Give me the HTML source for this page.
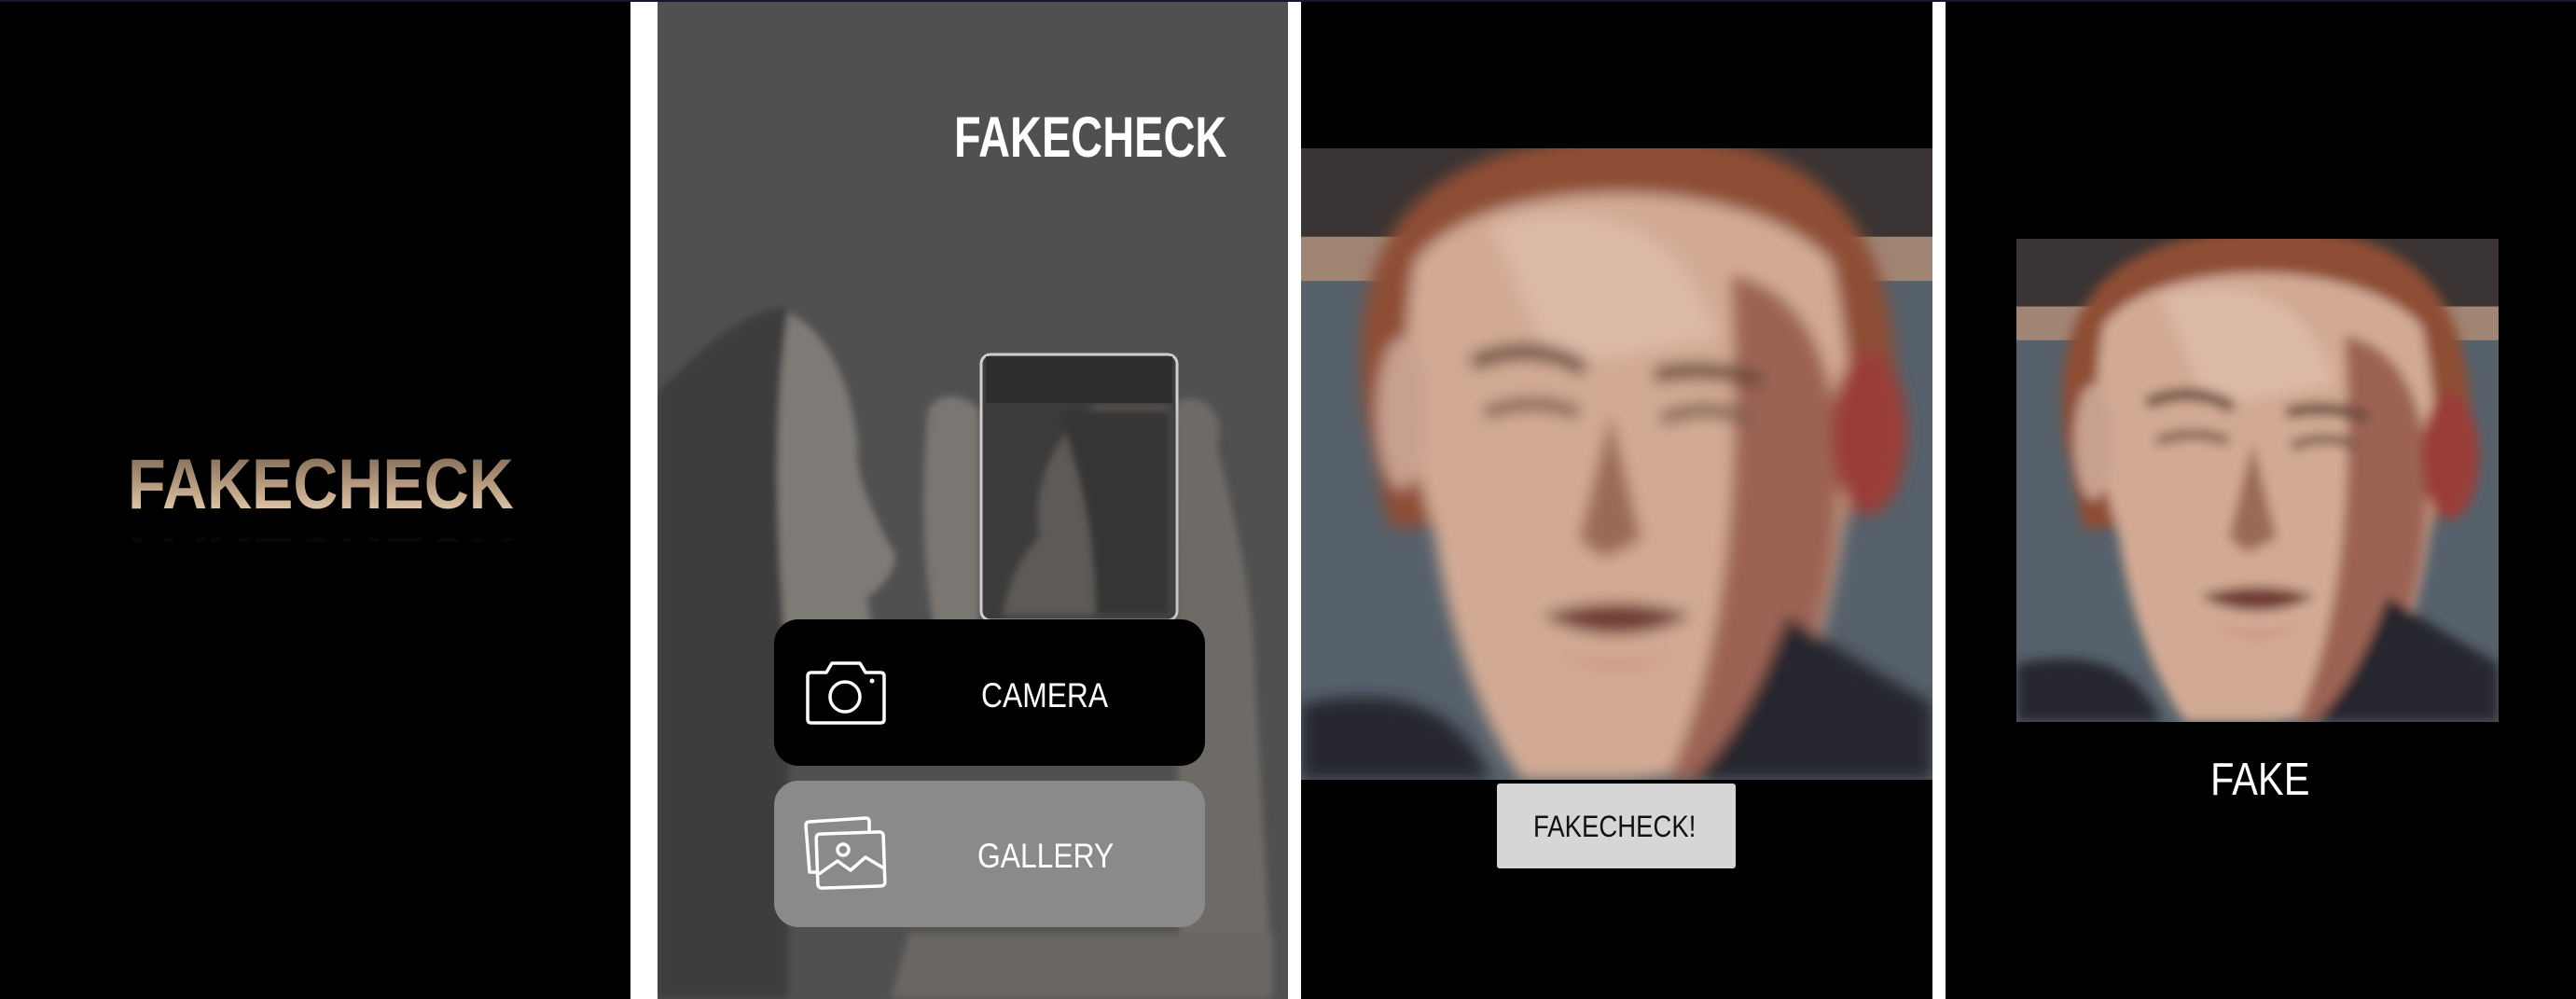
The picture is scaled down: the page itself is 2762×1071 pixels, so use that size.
<!DOCTYPE html>
<html><head><meta charset="utf-8"><style>
*{margin:0;padding:0;box-sizing:border-box}
body{width:2762px;height:1071px;background:#fff;position:relative;overflow:hidden;font-family:"Liberation Sans",sans-serif}
.p{position:absolute;top:0;height:1071px;overflow:hidden}
.topline{position:absolute;left:0;top:0;width:2762px;height:2px;background:#1e0f33;z-index:9}
.t{position:absolute;white-space:nowrap;transform-origin:0 0}
</style></head><body>
<div class="topline"></div>

<!-- Panel 1 -->
<div class="p" style="left:0;width:676px;background:#000">
  <div class="t" style="left:137px;top:482px;font-size:76px;font-weight:bold;line-height:76px;transform:scaleX(0.875);background:linear-gradient(#7a6452,#b89c80 50%,#ecd6b8);-webkit-background-clip:text;color:transparent">FAKECHECK</div>
  <div class="t" style="left:137px;top:640px;font-size:76px;font-weight:bold;line-height:76px;transform:scaleX(0.875) scaleY(-1);background:linear-gradient(#000 0%,#000 75%,#4a3e34 100%);-webkit-background-clip:text;color:transparent;opacity:.6">FAKECHECK</div>
</div>

<!-- Panel 2 -->
<div class="p" style="left:705px;width:676px;background:#505050">
  <svg width="676" height="1071" style="position:absolute;left:0;top:0">
    <defs><filter id="b2"><feGaussianBlur stdDeviation="4"/></filter></defs>
    <g filter="url(#b2)">
      <path d="M0 420 C60 360 100 330 140 330 L140 1071 L0 1071Z" fill="#3c3c3c"/>
      <path d="M140 335 C185 355 210 420 215 480 C212 505 225 540 255 595 C255 615 240 630 225 640 C228 660 232 690 235 720 L140 720 C128 600 122 450 140 335Z" fill="#7e7a76"/>
      <path d="M290 440 C300 420 330 420 345 440 L345 690 L300 690 C280 600 285 500 290 440Z" fill="#7a7672"/>
      <path d="M555 430 C585 420 610 440 600 480 C620 560 640 640 640 720 L660 1071 L560 1071Z" fill="#6e6a66"/>
      <path d="M270 1000 L660 1000 L660 1071 L250 1071Z" fill="#6a6662"/>
    </g>
    <rect x="347" y="380" width="210" height="285" rx="10" fill="#3c3c3c" stroke="#cfcfcf" stroke-width="3"/>
    <path d="M470 435 L550 435 L550 660 L370 660 C380 610 395 590 410 575 C400 530 420 470 470 435Z" fill="#5e5a56" filter="url(#b2)"/>
    <path d="M430 440 L550 440 L550 660 L470 660 C470 560 450 500 430 440Z" fill="#343434" filter="url(#b2)"/>
    <rect x="352" y="382" width="200" height="50" fill="#2e2e2e"/>
  </svg>
  <div class="t" style="left:318px;top:117px;font-size:61px;font-weight:bold;line-height:61px;color:#fff;transform:scaleX(0.77)">FAKECHECK</div>
  <div style="position:absolute;left:125px;top:664px;width:462px;height:157px;background:#000;border-radius:26px"></div>
  <div style="position:absolute;left:125px;top:837px;width:462px;height:157px;background:#8a8a8a;border-radius:26px"></div>
  <svg width="90" height="72" style="position:absolute;left:157px;top:707px" viewBox="0 0 90 72" fill="none" stroke="#fff" stroke-width="3.5" stroke-linejoin="round">
    <path d="M4 18 Q4 14 8 14 L24 14 L30 4 L60 4 L66 14 L82 14 Q86 14 86 18 L86 64 Q86 68 82 68 L8 68 Q4 68 4 64Z"/>
    <circle cx="44" cy="40" r="16"/>
    <circle cx="73" cy="23" r="2.5" fill="#fff" stroke="none"/>
  </svg>
  <svg width="90" height="80" style="position:absolute;left:157px;top:875px" viewBox="0 0 90 80" fill="none" stroke="#fff" stroke-width="3.5" stroke-linejoin="round">
    <path d="M14 60 L6 60 L2 10 Q2 6 6 6 L66 2 Q70 2 70 6 L70 16"/>
    <rect x="14" y="18" width="72" height="58" rx="4" transform="rotate(-2 50 47)"/>
    <circle cx="42" cy="36" r="6"/>
    <path d="M16 62 L36 48 L50 58 L66 44 L86 56"/>
  </svg>
  <div class="t" style="left:347px;top:727px;font-size:37px;line-height:37px;color:#fff;transform:scaleX(0.86)">CAMERA</div>
  <div class="t" style="left:343px;top:899px;font-size:37px;line-height:37px;color:#fff;transform:scaleX(0.86)">GALLERY</div>
</div>

<svg width="0" height="0" style="position:absolute">
  <defs>
    <filter id="fb" x="0" y="0" width="100%" height="100%"><feGaussianBlur stdDeviation="1.2"/></filter>
    <g id="face">
      <rect width="100" height="100" fill="#56616b"/>
      <rect width="100" height="16" fill="#3a3434"/>
      <rect y="14" width="100" height="7" fill="#a08474"/>
      <g filter="url(#fb)">
        <path d="M10 42 C6 8 25 -2 55 -2 C85 -2 96 15 94 45 L86 60 L14 60Z" fill="#8e4e36"/>
        <path d="M18 18 C28 4 70 3 84 18 C89 40 87 60 83 75 C78 90 66 100 50 100 L35 100 C28 90 23 75 21 60 C16 45 16 30 18 18Z" fill="#d2aa94"/>
        <path d="M30 12 C45 8 60 10 66 30 L40 35 Z" fill="#dcb8a6"/>
        <path d="M68 20 C80 22 87 35 85 60 C83 80 76 95 63 100 L58 100 C67 80 70 55 68 20Z" fill="#9c6454"/>
        <ellipse cx="16" cy="42" rx="4" ry="12" fill="#c8a090"/>
        <ellipse cx="90" cy="45" rx="6" ry="13" fill="#9a3c38"/>
        <path d="M27 34 Q37 30 45 35" stroke="#6a4a3a" stroke-width="2.5" fill="none"/>
        <path d="M56 36 Q64 34 73 37" stroke="#6a4a3a" stroke-width="2.5" fill="none"/>
        <path d="M29 42 Q37 39 44 42" stroke="#7a5a4a" stroke-width="2" fill="none"/>
        <path d="M57 43 Q64 40 71 43" stroke="#7a5a4a" stroke-width="2" fill="none"/>
        <path d="M49 42 L54 62 L48 65 L44 62Z" fill="#9a6a54"/>
        <path d="M38 74 Q50 70 62 74 Q50 80 38 74Z" fill="#6e3a30"/>
        <path d="M40 79 Q50 84 60 79 Q50 86 40 79Z" fill="#c8857a"/>
        <path d="M0 88 C15 85 25 88 30 100 L0 100Z" fill="#25252d"/>
        <path d="M77 74 C86 80 95 85 100 88 L100 100 L62 100 C70 92 74 82 77 74Z" fill="#25252d"/>
      </g>
    </g>
  </defs>
</svg>

<!-- Panel 3 -->
<div class="p" style="left:1395px;width:677px;background:#000">
  <svg width="677" height="677" viewBox="0 0 100 100" preserveAspectRatio="none" style="position:absolute;left:0;top:159px"><use href="#face"/></svg>
  <div style="position:absolute;left:210px;top:840px;width:256px;height:91px;background:#d6d6d6;border-radius:3px"></div>
  <div class="t" style="left:249px;top:870px;font-size:32px;line-height:32px;color:#111;transform:scaleX(0.86)">FAKECHECK!</div>
</div>

<!-- Panel 4 -->
<div class="p" style="left:2086px;width:676px;background:#000">
  <svg width="517" height="518" viewBox="0 0 100 100" preserveAspectRatio="none" style="position:absolute;left:76px;top:256px"><use href="#face"/></svg>
  <div class="t" style="left:284px;top:812px;font-size:49px;line-height:49px;color:#fff;transform:scaleX(0.85)">FAKE</div>
</div>
</body></html>
